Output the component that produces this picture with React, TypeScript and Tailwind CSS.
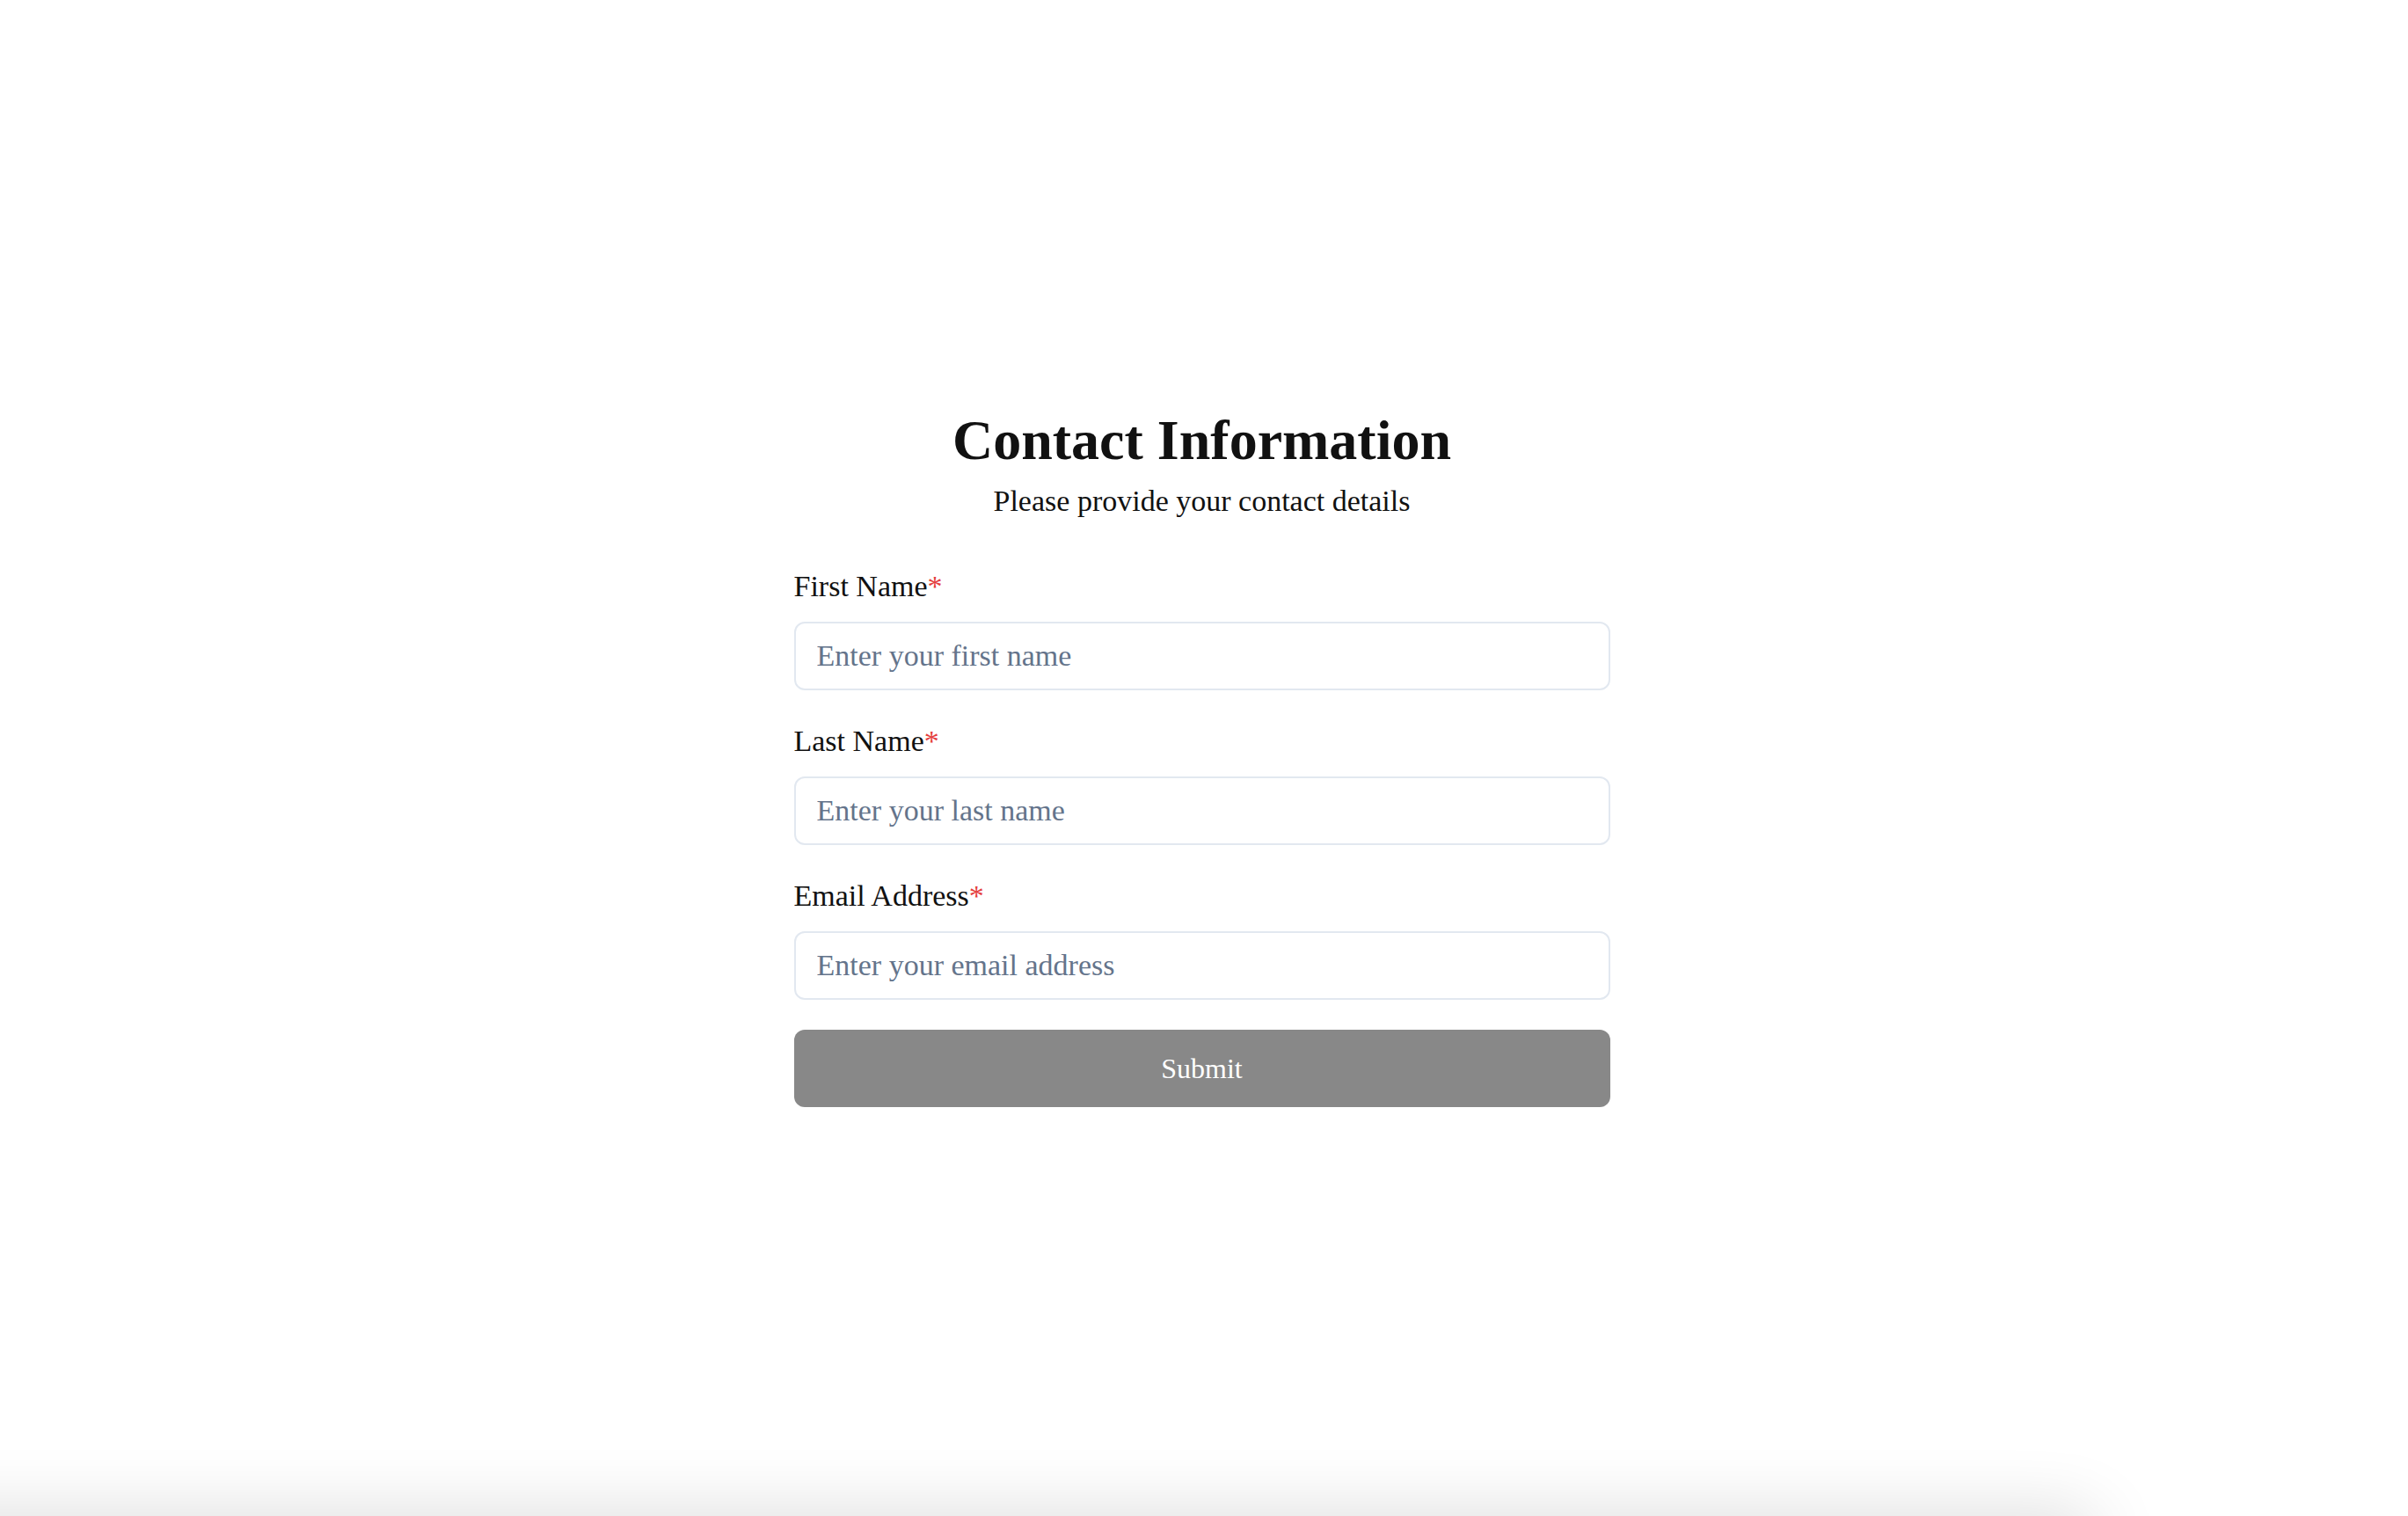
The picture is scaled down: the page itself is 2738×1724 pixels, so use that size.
import React, { useState } from 'react';

type Field = {
  id: 'firstName' | 'lastName' | 'email';
  label: string;
  placeholder: string;
  type: string;
};

const fields: Field[] = [
  { id: 'firstName', label: 'First Name', placeholder: 'Enter your first name', type: 'text' },
  { id: 'lastName', label: 'Last Name', placeholder: 'Enter your last name', type: 'text' },
  { id: 'email', label: 'Email Address', placeholder: 'Enter your email address', type: 'email' },
];

export default function App() {
  const [values, setValues] = useState({ firstName: '', lastName: '', email: '' });

  return (
    <div className="min-h-screen bg-white flex items-center justify-center font-['Liberation_Serif','Times_New_Roman',serif] text-[#111111]">
      <form
        className="w-[928px] mr-[5px] mb-[4px] flex flex-col"
        onSubmit={(e) => e.preventDefault()}
      >
        <h1 className="text-center text-[64px] leading-[80px] font-bold">Contact Information</h1>
        <p className="text-center text-[34px] leading-[40px] mt-[9px]">Please provide your contact details</p>

        <div className="flex flex-col gap-[38px] mt-[57px]">
          {fields.map((f) => (
            <div key={f.id} className="flex flex-col gap-[20px]">
              <label htmlFor={f.id} className="text-[34px] leading-[40px]">
                {f.label}
                <span className="text-[#e53e3e]">*</span>
              </label>
              <input
                id={f.id}
                type={f.type}
                value={values[f.id]}
                onChange={(e) => setValues({ ...values, [f.id]: e.target.value })}
                placeholder={f.placeholder}
                className="h-[78px] w-full rounded-[12px] border-2 border-[#e2e8f0] bg-white px-[24px] text-[34px] text-[#111111] placeholder:text-[#64748b] outline-none"
              />
            </div>
          ))}
        </div>

        <button
          type="submit"
          className="mt-[34px] h-[88px] w-full rounded-[12px] bg-[#888888] text-[32px] text-white"
        >
          Submit
        </button>
      </form>

      <div className="pointer-events-none fixed left-[-120px] bottom-[-60px] h-[60px] w-[2500px] shadow-[0_0_80px_rgba(0,0,0,0.16)]" />
    </div>
  );
}
